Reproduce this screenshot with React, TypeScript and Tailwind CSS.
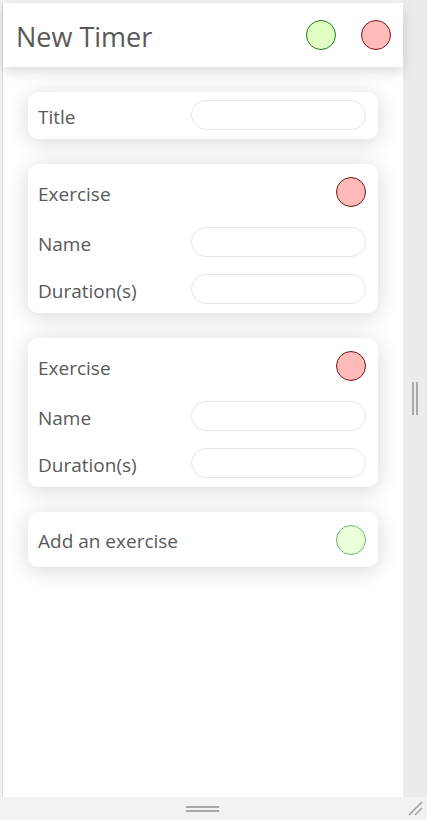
import React from "react"

function Circle({ kind, faded }: { kind: "add" | "remove"; faded?: boolean }) {
  if (kind === "add") {
    return (
      <button
        className={
          "w-[30px] h-[30px] rounded-full border shrink-0 " +
          (faded ? "border-[#6fb86f] bg-[#ecffdb]" : "border-[#1f7a1f] bg-[#e2ffc4]")
        }
      />
    )
  }
  return <button className="w-[30px] h-[30px] rounded-full border border-[#7a1414] bg-[#ffbaba] shrink-0" />
}

function Label({ text }: { text: string }) {
  return <span className="text-[19px] text-[#595959] pt-[4px] leading-none">{text}</span>
}

function Field({ label }: { label: string }) {
  return (
    <div className="flex items-center justify-between h-[30px]">
      <Label text={label} />
      <input className="w-[175px] h-[30px] rounded-full border border-[#e6e6e6] bg-white outline-none" />
    </div>
  )
}

function Card({ children }: { children: React.ReactNode }) {
  return (
    <div className="bg-white rounded-[10px] shadow-[0_3px_22px_rgba(0,0,0,0.16)] pl-[10px] pr-[12px]">
      {children}
    </div>
  )
}

function ExerciseCard() {
  return (
    <Card>
      <div className="flex flex-col pt-[13px] pb-[9px]">
        <div className="flex items-center justify-between h-[30px]">
          <Label text="Exercise" />
          <Circle kind="remove" />
        </div>
        <div className="flex flex-col gap-[17px] mt-[20px]">
          <Field label="Name" />
          <Field label="Duration(s)" />
        </div>
      </div>
    </Card>
  )
}

export default function App() {
  return (
    <div
      className="h-[820px] w-[427px] bg-[#f1f2f4] flex flex-col overflow-hidden"
      style={{ fontFamily: '"Open Sans", "Noto Sans", sans-serif' }}
    >
      <div className="flex flex-1 min-h-0">
        <div className="flex-1 pt-[3px] pl-[2px]">
          <div className="h-full bg-white border-l border-[#d9d9d9] flex flex-col">
            <div className="h-[64px] flex items-center justify-between pl-[13px] pr-[12px] shadow-[0_5px_12px_rgba(0,0,0,0.14)] relative z-10">
              <h1 className="text-[27px] text-[#595959] leading-none pt-[2px]">New Timer</h1>
              <div className="flex gap-[25px]">
                <Circle kind="add" />
                <Circle kind="remove" />
              </div>
            </div>
            <div className="flex flex-col gap-[25px] pt-[25px] pl-[25px] pr-[25px]">
              <Card>
                <div className="pt-[8px] pb-[9px]">
                  <Field label="Title" />
                </div>
              </Card>
              <ExerciseCard />
              <ExerciseCard />
              <Card>
                <div className="flex items-center justify-between h-[55px]">
                  <Label text="Add an exercise" />
                  <Circle kind="add" faded />
                </div>
              </Card>
            </div>
          </div>
        </div>
        <div className="w-[24px] bg-[#ebecf0] flex items-center justify-center">
          <div className="flex gap-[2px] h-[33px]">
            <div className="w-[2px] bg-[#a8a8a8]" />
            <div className="w-[2px] bg-[#a8a8a8]" />
          </div>
        </div>
      </div>
      <div className="h-[23px] relative flex items-center justify-center">
        <div className="flex flex-col gap-[2px] w-[33px] ml-[-22px]">
          <div className="h-[2px] bg-[#a8a8a8]" />
          <div className="h-[2px] bg-[#a8a8a8]" />
        </div>
        <svg className="absolute right-[4px] bottom-[4px]" width="16" height="16" viewBox="0 0 16 16">
          <line x1="2" y1="15" x2="15" y2="2" stroke="#a0a0a0" strokeWidth="1.6" />
          <line x1="8" y1="15" x2="15" y2="8" stroke="#a0a0a0" strokeWidth="1.6" />
        </svg>
      </div>
    </div>
  )
}
